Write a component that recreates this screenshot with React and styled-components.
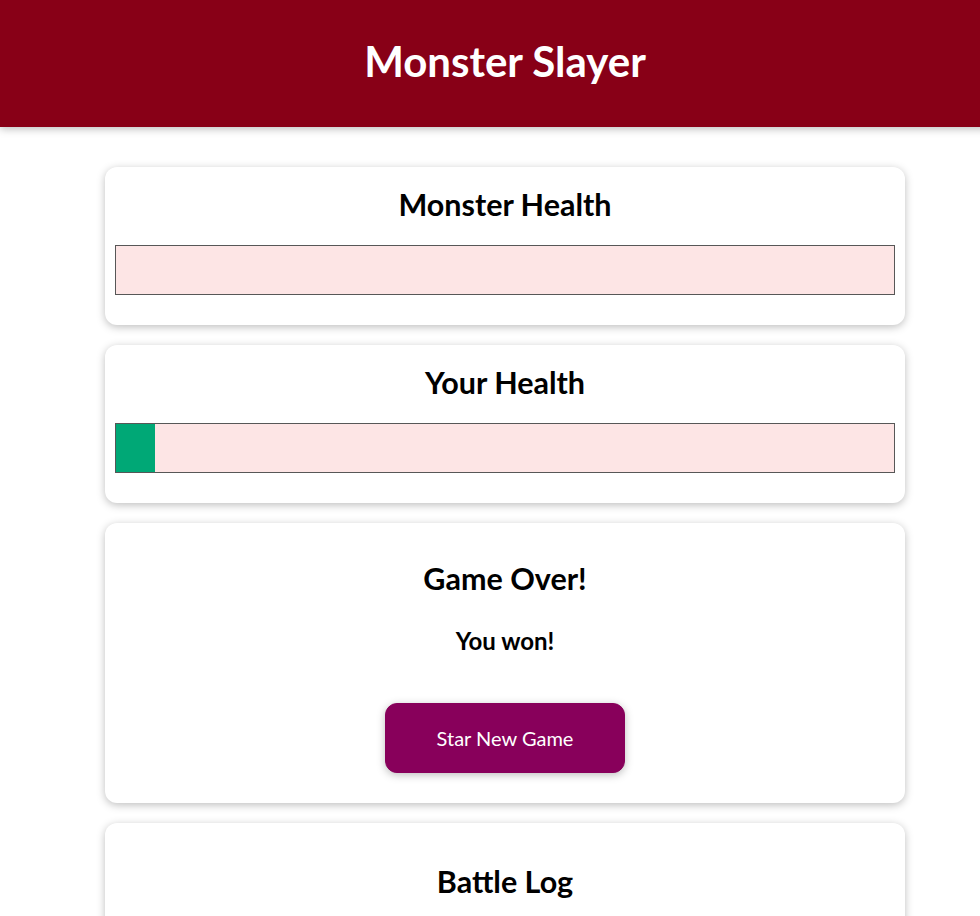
import React from 'react'
import styled, { createGlobalStyle } from 'styled-components'

const GlobalStyle = createGlobalStyle`
  * { box-sizing: border-box; }
  html { font-family: Lato, "Noto Sans", sans-serif; }
  body { margin: 0; background: #ffffff; overflow-x: hidden; }
  #root { width: 1010px; }
`

const Header = styled.header`
  height: 127px;
  padding-bottom: 6px;
  display: flex;
  align-items: center;
  justify-content: center;
  background-color: #880017;
  color: white;
  box-shadow: 0 2px 8px rgba(0, 0, 0, 0.26);
  margin-bottom: 40px;
`

const Title = styled.h1`
  margin: 0;
  font-size: 42px;
  font-weight: 700;
  line-height: 1;
`

const Main = styled.main`
  width: 800px;
  margin: 0 auto;
  display: flex;
  flex-direction: column;
  gap: 20px;
`

const Card = styled.section`
  text-align: center;
  padding: ${p => p.$top || 20}px 10px 30px;
  box-shadow: 0 2px 8px rgba(0, 0, 0, 0.26);
  border-radius: 12px;
  background: white;
`

const Heading = styled.h2`
  margin: 0;
  font-size: 30.5px;
  font-weight: 700;
  line-height: 34px;
  color: #000;
`

const Message = styled.h3`
  margin: 32px 0 0;
  font-size: 24px;
  font-weight: 700;
  line-height: 28px;
`

const HealthBar = styled.div`
  width: 100%;
  height: 50px;
  margin-top: 24px;
  border: 1px solid #575757;
  background: #fde5e5;
`

const HealthValue = styled.div`
  height: 100%;
  background-color: #00a876;
`

const Button = styled.button`
  font: inherit;
  font-size: 20px;
  width: 240px;
  height: 70px;
  margin-top: 48px;
  border: 1px solid #88005b;
  background-color: #88005b;
  color: white;
  border-radius: 12px;
  cursor: pointer;
  box-shadow: 0 2px 8px rgba(0, 0, 0, 0.26);
`

const LogBody = styled.div`
  height: 60px;
`

export default function App() {
  const monsterHealth = 0
  const playerHealth = 5
  return (
    <>
      <GlobalStyle />
      <Header>
        <Title>Monster Slayer</Title>
      </Header>
      <Main>
        <Card>
          <Heading>Monster Health</Heading>
          <HealthBar>
            <HealthValue style={{ width: monsterHealth + '%' }} />
          </HealthBar>
        </Card>
        <Card>
          <Heading>Your Health</Heading>
          <HealthBar>
            <HealthValue style={{ width: playerHealth + '%' }} />
          </HealthBar>
        </Card>
        <Card $top={38}>
          <Heading>Game Over!</Heading>
          <Message>You won!</Message>
          <Button>Star New Game</Button>
        </Card>
        <Card $top={41}>
          <Heading>Battle Log</Heading>
          <LogBody />
        </Card>
      </Main>
    </>
  )
}
